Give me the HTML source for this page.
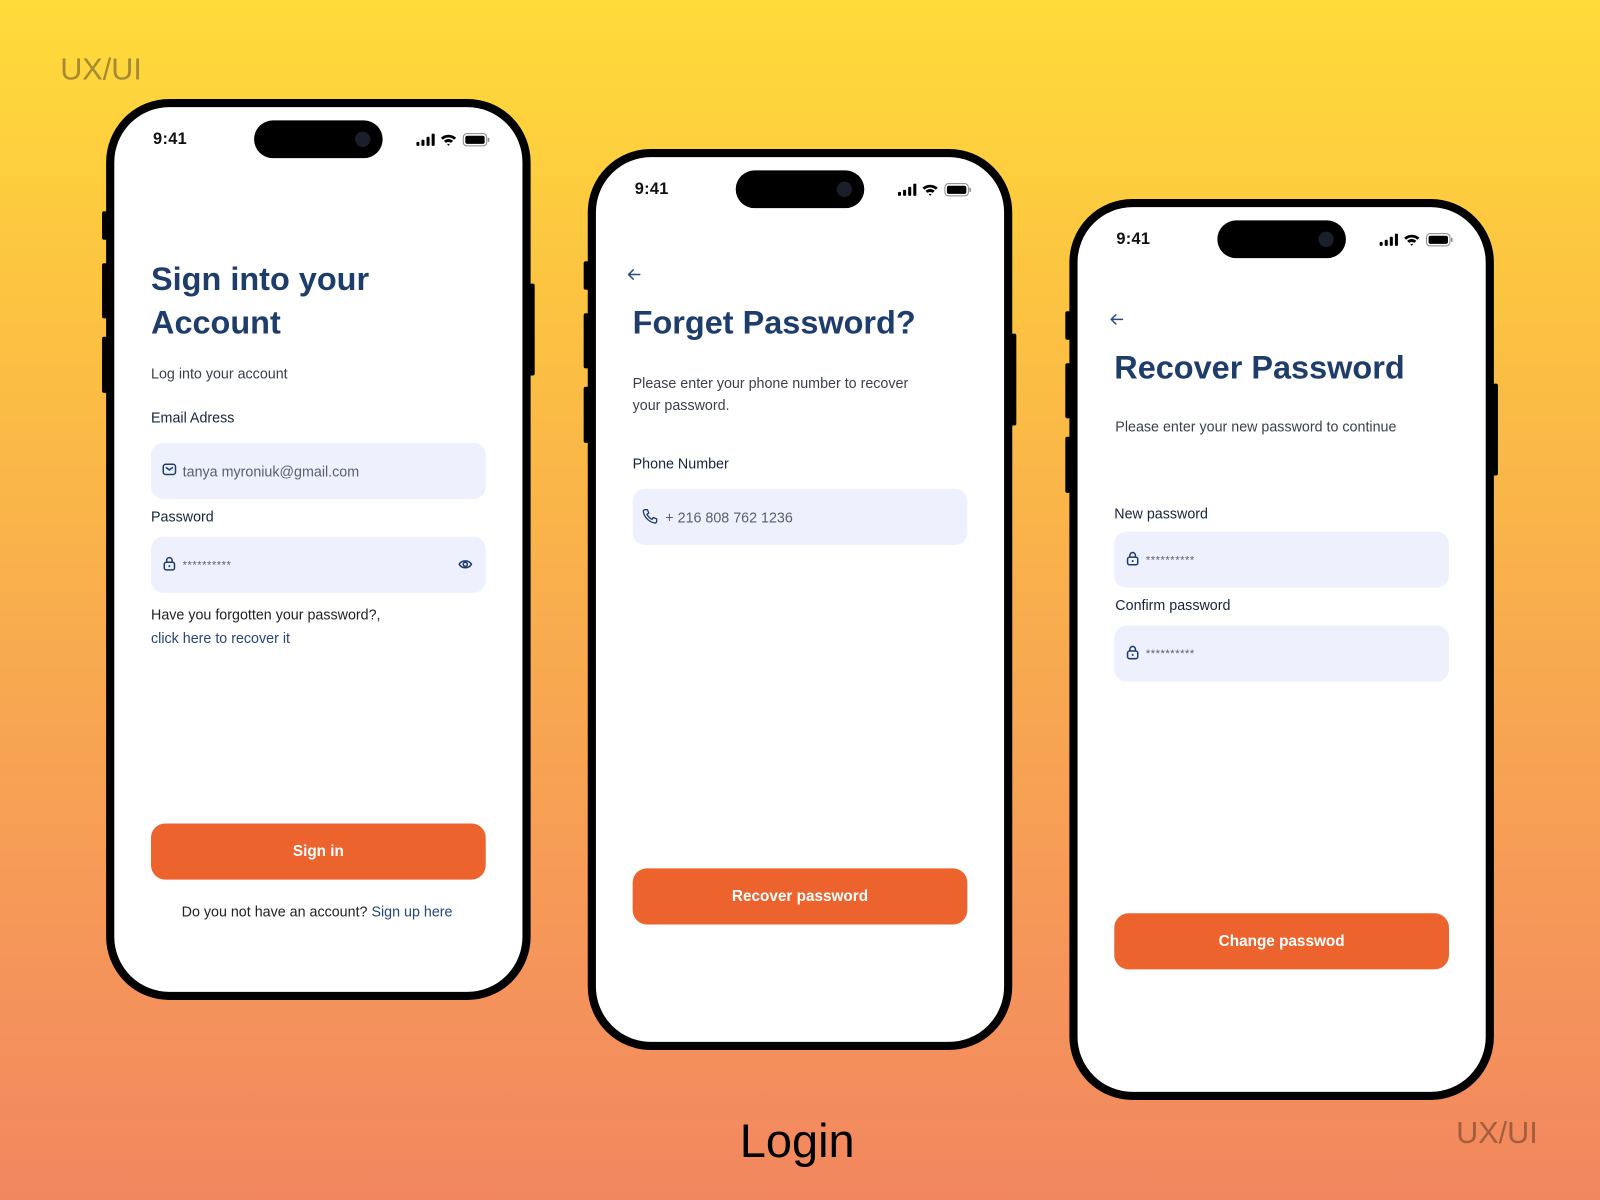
<!DOCTYPE html>
<html><head><meta charset="utf-8">
<style>
*{margin:0;padding:0;box-sizing:border-box}
html,body{width:1600px;height:1200px;overflow:hidden}
body{background:linear-gradient(180deg,#ffdc3a 0%,#fcc341 25%,#f8aa4f 55%,#f5955a 80%,#f2875f 100%);font-family:"Liberation Sans",Roboto,sans-serif}
#s{position:absolute;left:0;top:0;width:1568px;height:1176px;transform:scale(1.020408);transform-origin:0 0}
.ab{position:absolute}
.phone{position:absolute;width:416px;height:883px;border:8px solid #000;border-radius:62px;background:#fff}
.btnside{position:absolute;background:#000;width:5px;border-radius:2px}
.t{position:absolute;white-space:nowrap;line-height:20px}
.time{position:absolute;left:38px;top:23px;font-size:16px;font-weight:bold;color:#111;letter-spacing:.3px}
.isl{position:absolute;left:137px;top:13px;width:126px;height:37px;border-radius:19px;background:#000}
.cam{position:absolute;right:12px;top:11px;width:15px;height:15px;border-radius:50%;background:#1a1f2b}
.title{position:absolute;left:36px;font-size:31.8px;font-weight:bold;color:#1f3d6b;line-height:43px;white-space:nowrap}
.sub{font-size:14px;color:#3a3f4a}
.lbl{font-size:14px;color:#16233a}
.inp{position:absolute;left:36px;width:328px;height:55px;border-radius:12px;background:#eef1fd}
.inp span{position:absolute;left:31px;top:18px;font-size:14px;color:#5a5f69;line-height:20px}
.inp svg.ic{position:absolute;left:11px;top:19px}
.btn{position:absolute;left:36px;width:328px;height:55px;border-radius:14px;background:#ec632e;color:#fff;font-size:15px;font-weight:bold;text-align:center;line-height:55px}
.link{color:#23467c}
</style></head><body>
<div id="s">
<div class="t" style="left:59px;top:52px;font-size:30px;line-height:34px;color:#a58934">UX/UI</div>
<div class="t" style="left:1427px;top:1094px;font-size:30px;line-height:34px;color:#a35e3d">UX/UI</div>
<div class="t" style="left:725px;top:1092px;font-size:46px;line-height:52px;color:#000">Login</div>

<div class="btnside" style="left:100px;top:207px;height:28px"></div>
<div class="btnside" style="left:100px;top:258px;height:54px"></div>
<div class="btnside" style="left:100px;top:330px;height:55px"></div>
<div class="btnside" style="left:519px;top:278px;height:90px"></div>
<div class="btnside" style="left:572px;top:256px;height:28px"></div>
<div class="btnside" style="left:572px;top:307px;height:54px"></div>
<div class="btnside" style="left:572px;top:379px;height:55px"></div>
<div class="btnside" style="left:991px;top:327px;height:90px"></div>
<div class="btnside" style="left:1044px;top:305px;height:28px"></div>
<div class="btnside" style="left:1044px;top:356px;height:54px"></div>
<div class="btnside" style="left:1044px;top:428px;height:55px"></div>
<div class="btnside" style="left:1463px;top:376px;height:90px"></div>

<svg width="0" height="0" style="position:absolute">
<defs>
<g id="stat">
<rect x="0" y="9" width="3" height="4" rx="1" fill="#000"/><rect x="5" y="7" width="3" height="6" rx="1" fill="#000"/><rect x="10" y="4" width="3" height="9" rx="1" fill="#000"/><rect x="15" y="1" width="3" height="12" rx="1" fill="#000"/>
<path d="M24 5 A11 11 0 0 1 39 5 L37 7 A8 8 0 0 0 26 7Z M27 8 A6.5 6.5 0 0 1 36 8 L34 10 A4 4 0 0 0 29 10Z M30 11 L31.5 13 L33 11Z" fill="#000"/>
<rect x="46" y="1" width="23" height="12" rx="3.5" fill="none" stroke="#888" stroke-width="1"/><rect x="48" y="3" width="19" height="8" rx="2" fill="#000"/><rect x="70" y="5" width="1.5" height="4" fill="#888"/>
</g>
<g id="lock"><rect x="1.5" y="6" width="10" height="7.5" rx="2" fill="none" stroke="#1f3d6b" stroke-width="1.5"/><path d="M3.8 6 V4.2 a2.7 2.7 0 0 1 5.4 0 V6" fill="none" stroke="#1f3d6b" stroke-width="1.5"/><path d="M6.5 8.8 v2" stroke="#1f3d6b" stroke-width="1.5"/></g>
<g id="arrow"><path d="M13 7 H2 M6.5 2.5 L2 7 L6.5 11.5" fill="none" stroke="#2a4a7f" stroke-width="1.5" stroke-linecap="round" stroke-linejoin="round"/></g>
</defs></svg>

<div class="phone" style="left:104px;top:97px">
 <div class="time">9:41</div>
 <div class="isl"><div class="cam"></div></div>
 <svg class="ab" style="left:296px;top:25px" width="76" height="15"><use href="#stat"/></svg>
 <div class="title" style="top:147px">Sign into your<br>Account</div>
 <div class="t sub" style="left:36px;top:251px">Log into your account</div>
 <div class="t lbl" style="left:36px;top:294px">Email Adress</div>
 <div class="inp" style="top:329px">
  <svg class="ic" width="14" height="14" viewBox="0 0 14 14"><rect x="1" y="2" width="12" height="10" rx="2.5" fill="none" stroke="#1f3d6b" stroke-width="1.5"/><path d="M3.5 5 L7 7.5 L10.5 5" fill="none" stroke="#1f3d6b" stroke-width="1.5"/></svg>
  <span>tanya myroniuk@gmail.com</span></div>
 <div class="t lbl" style="left:36px;top:391px">Password</div>
 <div class="inp" style="top:421px">
  <svg class="ic" width="14" height="15" viewBox="0 0 13 15"><use href="#lock"/></svg>
  <span style="font-size:11px;letter-spacing:.5px">**********</span>
  <svg class="ab" style="left:301px;top:21px" width="14" height="12" viewBox="0 0 14 12"><path d="M1 6 C3.5 1.5 10.5 1.5 13 6 C10.5 10.5 3.5 10.5 1 6Z" fill="none" stroke="#1f3d6b" stroke-width="1.5"/><circle cx="7" cy="6" r="2" fill="none" stroke="#1f3d6b" stroke-width="1.5"/></svg>
 </div>
 <div class="t sub" style="left:36px;top:487px;color:#222">Have you forgotten your password?,</div>
 <div class="t sub link" style="left:36px;top:510px">click here to recover it</div>
 <div class="btn" style="top:702px">Sign in</div>
 <div class="t sub" style="left:66px;top:778px;color:#222">Do you not have an account? <span class="link">Sign up here</span></div>
</div>

<div class="phone" style="left:576px;top:146px">
 <div class="time">9:41</div>
 <div class="isl"><div class="cam"></div></div>
 <svg class="ab" style="left:296px;top:25px" width="76" height="15"><use href="#stat"/></svg>
 <svg class="ab" style="left:30px;top:108px" width="15" height="14"><use href="#arrow"/></svg>
 <div class="title" style="top:141px">Forget Password?</div>
 <div class="t sub" style="left:36px;top:210px;line-height:22px">Please enter your phone number to recover<br>your password.</div>
 <div class="t lbl" style="left:36px;top:290px">Phone Number</div>
 <div class="inp" style="top:325px">
  <svg class="ic" width="16" height="16" viewBox="0 0 16 16" style="left:9px;top:19px"><path d="M3 1.5 L5.5 1.5 L6.8 4.8 L5 6 C6 8 8 10 10 11 L11.2 9.2 L14.5 10.5 L14.5 13 C14.5 14 13.5 14.8 12.5 14.5 C7 13.5 2.5 9 1.5 3.5 C1.3 2.5 2 1.5 3 1.5Z" fill="none" stroke="#1f3d6b" stroke-width="1.3" stroke-linejoin="round"/></svg>
  <span style="left:32px">+ 216 808 762 1236</span></div>
 <div class="btn" style="top:697px">Recover password</div>
</div>

<div class="phone" style="left:1048px;top:195px">
 <div class="time">9:41</div>
 <div class="isl"><div class="cam"></div></div>
 <svg class="ab" style="left:296px;top:25px" width="76" height="15"><use href="#stat"/></svg>
 <svg class="ab" style="left:31px;top:103px" width="15" height="14"><use href="#arrow"/></svg>
 <div class="title" style="top:136px">Recover Password</div>
 <div class="t sub" style="left:37px;top:205px">Please enter your new password to continue</div>
 <div class="t lbl" style="left:36px;top:290px">New password</div>
 <div class="inp" style="top:318px">
  <svg class="ic" width="14" height="15" viewBox="0 0 13 15"><use href="#lock"/></svg>
  <span style="font-size:11px;letter-spacing:.5px">**********</span></div>
 <div class="t lbl" style="left:37px;top:380px">Confirm password</div>
 <div class="inp" style="top:410px">
  <svg class="ic" width="14" height="15" viewBox="0 0 13 15"><use href="#lock"/></svg>
  <span style="font-size:11px;letter-spacing:.5px">**********</span></div>
 <div class="btn" style="top:692px">Change passwod</div>
</div>
</div>
</body></html>
